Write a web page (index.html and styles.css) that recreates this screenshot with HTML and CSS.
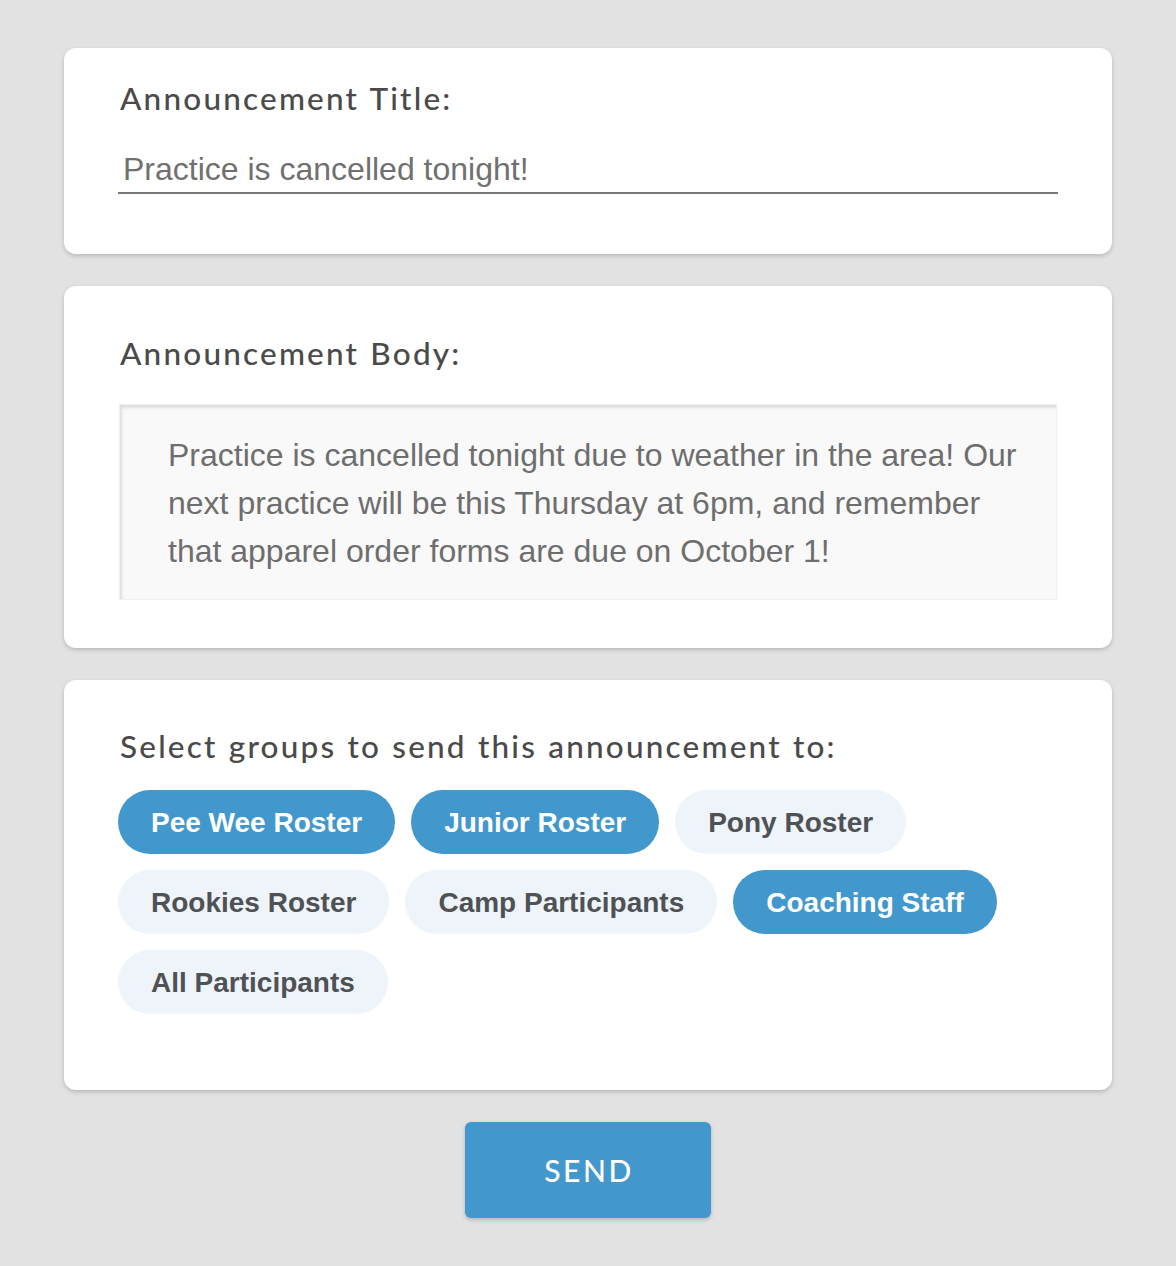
FILE: index.html
```html
<!DOCTYPE html>
<html>
<head>
<meta charset="utf-8">
<link rel="stylesheet" href="styles.css">
</head>
<body>
<main class="page">
  <section class="card card-title">
    <div class="label">Announcement Title:</div>
    <div class="line-input">Practice is cancelled tonight!</div>
  </section>
  <section class="card card-body">
    <div class="label">Announcement Body:</div>
    <div class="textarea">Practice is cancelled tonight due to weather in the area! Our next practice will be this Thursday at 6pm, and remember that apparel order forms are due on October 1!</div>
  </section>
  <section class="card card-groups">
    <div class="label">Select groups to send this announcement to:</div>
    <div class="chips">
      <span class="chip active">Pee Wee Roster</span>
      <span class="chip active">Junior Roster</span>
      <span class="chip">Pony Roster</span>
      <span class="chip">Rookies Roster</span>
      <span class="chip">Camp Participants</span>
      <span class="chip active">Coaching Staff</span>
      <span class="chip">All Participants</span>
    </div>
  </section>
  <div class="actions">
    <button class="send">SEND</button>
  </div>
</main>
</body>
</html>
```
FILE: styles.css
```css
html, body {
  margin: 0;
  padding: 0;
  background: #e2e2e2;
}
.page {
  width: 1048px;
  margin: 0 auto;
  padding-top: 48px;
  display: flex;
  flex-direction: column;
  gap: 32px;
}
.card {
  background: #ffffff;
  border-radius: 12px;
  box-shadow: 0 2px 4px rgba(0, 0, 0, 0.18);
  padding: 49px 55px 48px 54px;
  display: flex;
  flex-direction: column;
}
.card-title {
  padding-top: 32px;
  padding-bottom: 60px;
  padding-right: 54px;
}
.card-groups {
  padding-top: 48px;
  padding-bottom: 76px;
}
.label {
  font-family: "Lato", "DejaVu Sans", sans-serif;
  font-weight: 500;
  font-size: 31.5px;
  line-height: 36px;
  letter-spacing: 2.2px;
  word-spacing: 1px;
  color: #4a4a4a;
  padding-left: 2px;
}
.line-input {
  margin-top: 35px;
  font-family: "Liberation Sans", Arial, sans-serif;
  font-size: 32px;
  line-height: 36px;
  color: #707070;
  padding: 0 0 5px 5px;
  border-bottom: 2px solid #777777;
}
.textarea {
  margin-top: 33px;
  margin-left: 1px;
  height: 196px;
  box-sizing: border-box;
  background: #f9f9f9;
  border: 1px solid #efefef;
  box-shadow: inset 2px 3px 3px rgba(0, 0, 0, 0.11);
  padding: 26px 18px 0 48px;
  font-family: "Liberation Sans", Arial, sans-serif;
  font-size: 32px;
  line-height: 48px;
  color: #6e6e6e;
}
.chips {
  margin-top: 26px;
  display: flex;
  flex-wrap: wrap;
  gap: 16px;
  width: 900px;
}
.chip {
  height: 64px;
  box-sizing: border-box;
  padding: 2px 33px 0;
  border-radius: 32px;
  display: inline-flex;
  align-items: center;
  font-family: "Liberation Sans", Arial, sans-serif;
  font-weight: 700;
  font-size: 28px;
  color: #4f5255;
  background: #eef4fa;
}
.chip.active {
  background: #4298cc;
  color: #ffffff;
}
.actions {
  display: flex;
  justify-content: center;
  padding-bottom: 48px;
}
.send {
  width: 246px;
  height: 96px;
  border: none;
  border-radius: 6px;
  background: #4298cc;
  box-shadow: 0 2px 4px rgba(0, 0, 0, 0.2);
  color: #ffffff;
  font-family: "Lato", "DejaVu Sans", sans-serif;
  font-weight: 500;
  font-size: 30px;
  letter-spacing: 2.5px;
  padding: 0 0 0 2px;
}
```
